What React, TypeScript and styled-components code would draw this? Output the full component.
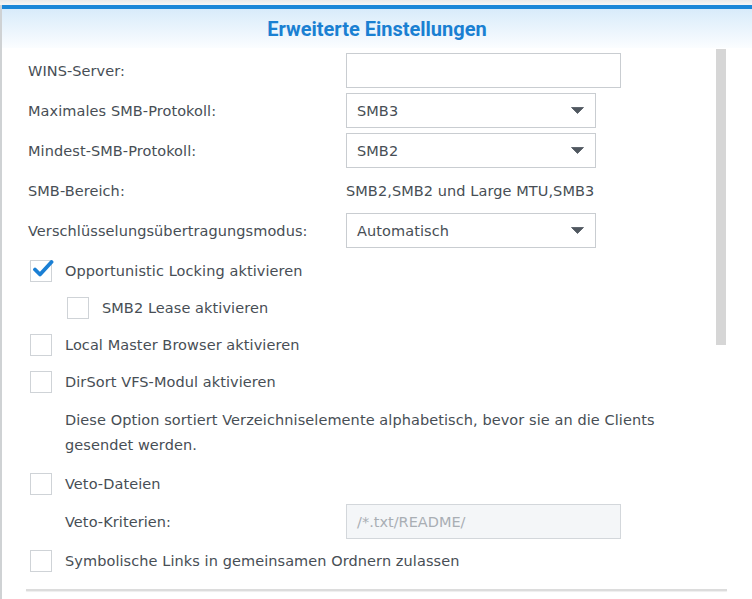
import React from "react";
import styled, { createGlobalStyle } from "styled-components";

const GlobalStyle = createGlobalStyle`
  html, body {
    margin: 0;
    padding: 0;
    background: #fff;
  }
  body {
    font-family: "DejaVu Sans", Verdana, sans-serif;
  }
`;

const Frame = styled.div`
  width: 752px;
  height: 599px;
  overflow: hidden;
  display: flex;
  flex-direction: column;
  background: #f2f3f4;
`;

const TopStrip = styled.div`
  height: 5px;
  background: linear-gradient(#e9eaeb, #f6f6f6);
`;

const Dialog = styled.div`
  flex: 1;
  display: flex;
  flex-direction: column;
  background: #fff;
  border-left: 2px solid #cfd2d4;
`;

const BlueBar = styled.div`
  height: 4px;
  background: #1b87d8;
`;

const Header = styled.div`
  height: 39px;
  display: flex;
  align-items: center;
  justify-content: center;
  background: linear-gradient(#d8ebfa, #fbfdff);
`;

const Title = styled.h1`
  margin: 0;
  font-family: Roboto, "Liberation Sans", sans-serif;
  font-weight: 700;
  font-size: 20px;
  color: #1a80d2;
`;

const Body = styled.div`
  display: flex;
  height: 541px;
  overflow: hidden;
`;

const Content = styled.div`
  flex: 1;
  padding: 5px 0 0 26px;
  display: flex;
  flex-direction: column;
  color: #474e55;
  font-size: 14.5px;
  letter-spacing: 0.08px;
`;

const ScrollTrack = styled.div`
  width: 10px;
  margin-right: 26px;
  padding-top: 1px;
`;

const ScrollThumb = styled.div`
  height: 296px;
  background: #d6d6d6;
`;

const FormRow = styled.div<{ $mt?: number }>`
  display: flex;
  align-items: center;
  height: 35px;
  margin-top: ${(p) => p.$mt ?? 5}px;
  &:first-child {
    margin-top: 0;
  }
`;

const Label = styled.span<{ $indent?: number }>`
  flex-shrink: 0;
  width: ${(p) => 318 - (p.$indent ?? 0)}px;
  margin-left: ${(p) => p.$indent ?? 0}px;
  white-space: nowrap;
`;

const Value = styled.span`
  white-space: nowrap;
`;

const TextInput = styled.div<{ $disabled?: boolean }>`
  box-sizing: border-box;
  flex-shrink: 0;
  width: 275px;
  height: 35px;
  border: 1px solid ${(p) => (p.$disabled ? "#d3d7db" : "#c9cdd1")};
  background: ${(p) => (p.$disabled ? "#f4f6f8" : "#fff")};
  color: #a9aeb4;
  display: flex;
  align-items: center;
  padding-left: 10px;
  letter-spacing: 0;
`;

const SelectBox = styled.div`
  box-sizing: border-box;
  flex-shrink: 0;
  width: 250px;
  height: 35px;
  border: 1px solid #c9cdd1;
  display: flex;
  align-items: center;
  justify-content: space-between;
  padding: 0 11px 0 10px;
`;

const CheckRow = styled.div<{ $indent?: number; $mt?: number }>`
  display: flex;
  align-items: center;
  gap: 13px;
  height: 37px;
  padding-left: ${(p) => 2 + (p.$indent ?? 0)}px;
  margin-top: ${(p) => p.$mt ?? 0}px;
`;

const Box = styled.span`
  position: relative;
  box-sizing: border-box;
  width: 22px;
  height: 22px;
  border: 1px solid #cfd3d7;
  background: #fff;
  flex-shrink: 0;
`;

const Tick = styled.svg`
  position: absolute;
  left: 1px;
  top: -3px;
  width: 22px;
  height: 22px;
`;

const Description = styled.p`
  margin: 8px 0 0 37px;
  line-height: 25px;
  width: 620px;
`;

const Footer = styled.div`
  height: 2px;
  margin: 0 25px 0 24px;
  background: #dcdcdc;
  box-shadow: 0 1px 1px #eee;
`;

const Caret = () => (
  <svg width="13" height="7" viewBox="0 0 13 7">
    <path
      d="M0.5 0.5 H12.5 L6.5 6.5 Z"
      fill="#4f575f"
      stroke="#4f575f"
      strokeWidth="0.8"
      strokeLinejoin="round"
    />
  </svg>
);

const Select = ({ value }: { value: string }) => (
  <SelectBox>
    <span>{value}</span>
    <Caret />
  </SelectBox>
);

const Checkbox = ({ checked }: { checked?: boolean }) => (
  <Box>
    {checked && (
      <Tick viewBox="0 0 22 22">
        <path
          d="M3 11.5 L8 16.5 L19.5 4"
          fill="none"
          stroke="#1a7fd4"
          strokeWidth="3.8"
          strokeLinecap="round"
          strokeLinejoin="round"
        />
      </Tick>
    )}
  </Box>
);

const App = () => {
  return (
    <>
      <GlobalStyle />
      <Frame>
        <TopStrip />
        <Dialog>
          <BlueBar />
          <Header>
            <Title>Erweiterte Einstellungen</Title>
          </Header>
          <Body>
            <Content>
              <FormRow>
                <Label>WINS-Server:</Label>
                <TextInput />
              </FormRow>
              <FormRow>
                <Label>Maximales SMB-Protokoll:</Label>
                <Select value="SMB3" />
              </FormRow>
              <FormRow>
                <Label>Mindest-SMB-Protokoll:</Label>
                <Select value="SMB2" />
              </FormRow>
              <FormRow>
                <Label>SMB-Bereich:</Label>
                <Value>SMB2,SMB2 und Large MTU,SMB3</Value>
              </FormRow>
              <FormRow>
                <Label>Verschlüsselungsübertragungsmodus:</Label>
                <Select value="Automatisch" />
              </FormRow>
              <CheckRow $mt={4}>
                <Checkbox checked />
                <span>Opportunistic Locking aktivieren</span>
              </CheckRow>
              <CheckRow $indent={37}>
                <Checkbox />
                <span>SMB2 Lease aktivieren</span>
              </CheckRow>
              <CheckRow>
                <Checkbox />
                <span>Local Master Browser aktivieren</span>
              </CheckRow>
              <CheckRow>
                <Checkbox />
                <span>DirSort VFS-Modul aktivieren</span>
              </CheckRow>
              <Description>
                Diese Option sortiert Verzeichniselemente alphabetisch, bevor sie an die Clients
                gesendet werden.
              </Description>
              <CheckRow $mt={7}>
                <Checkbox />
                <span>Veto-Dateien</span>
              </CheckRow>
              <FormRow $mt={2}>
                <Label $indent={37}>Veto-Kriterien:</Label>
                <TextInput $disabled>/*.txt/README/</TextInput>
              </FormRow>
              <CheckRow $mt={3}>
                <Checkbox />
                <span>Symbolische Links in gemeinsamen Ordnern zulassen</span>
              </CheckRow>
            </Content>
            <ScrollTrack>
              <ScrollThumb />
            </ScrollTrack>
          </Body>
          <Footer />
        </Dialog>
      </Frame>
    </>
  );
};

export default App;
